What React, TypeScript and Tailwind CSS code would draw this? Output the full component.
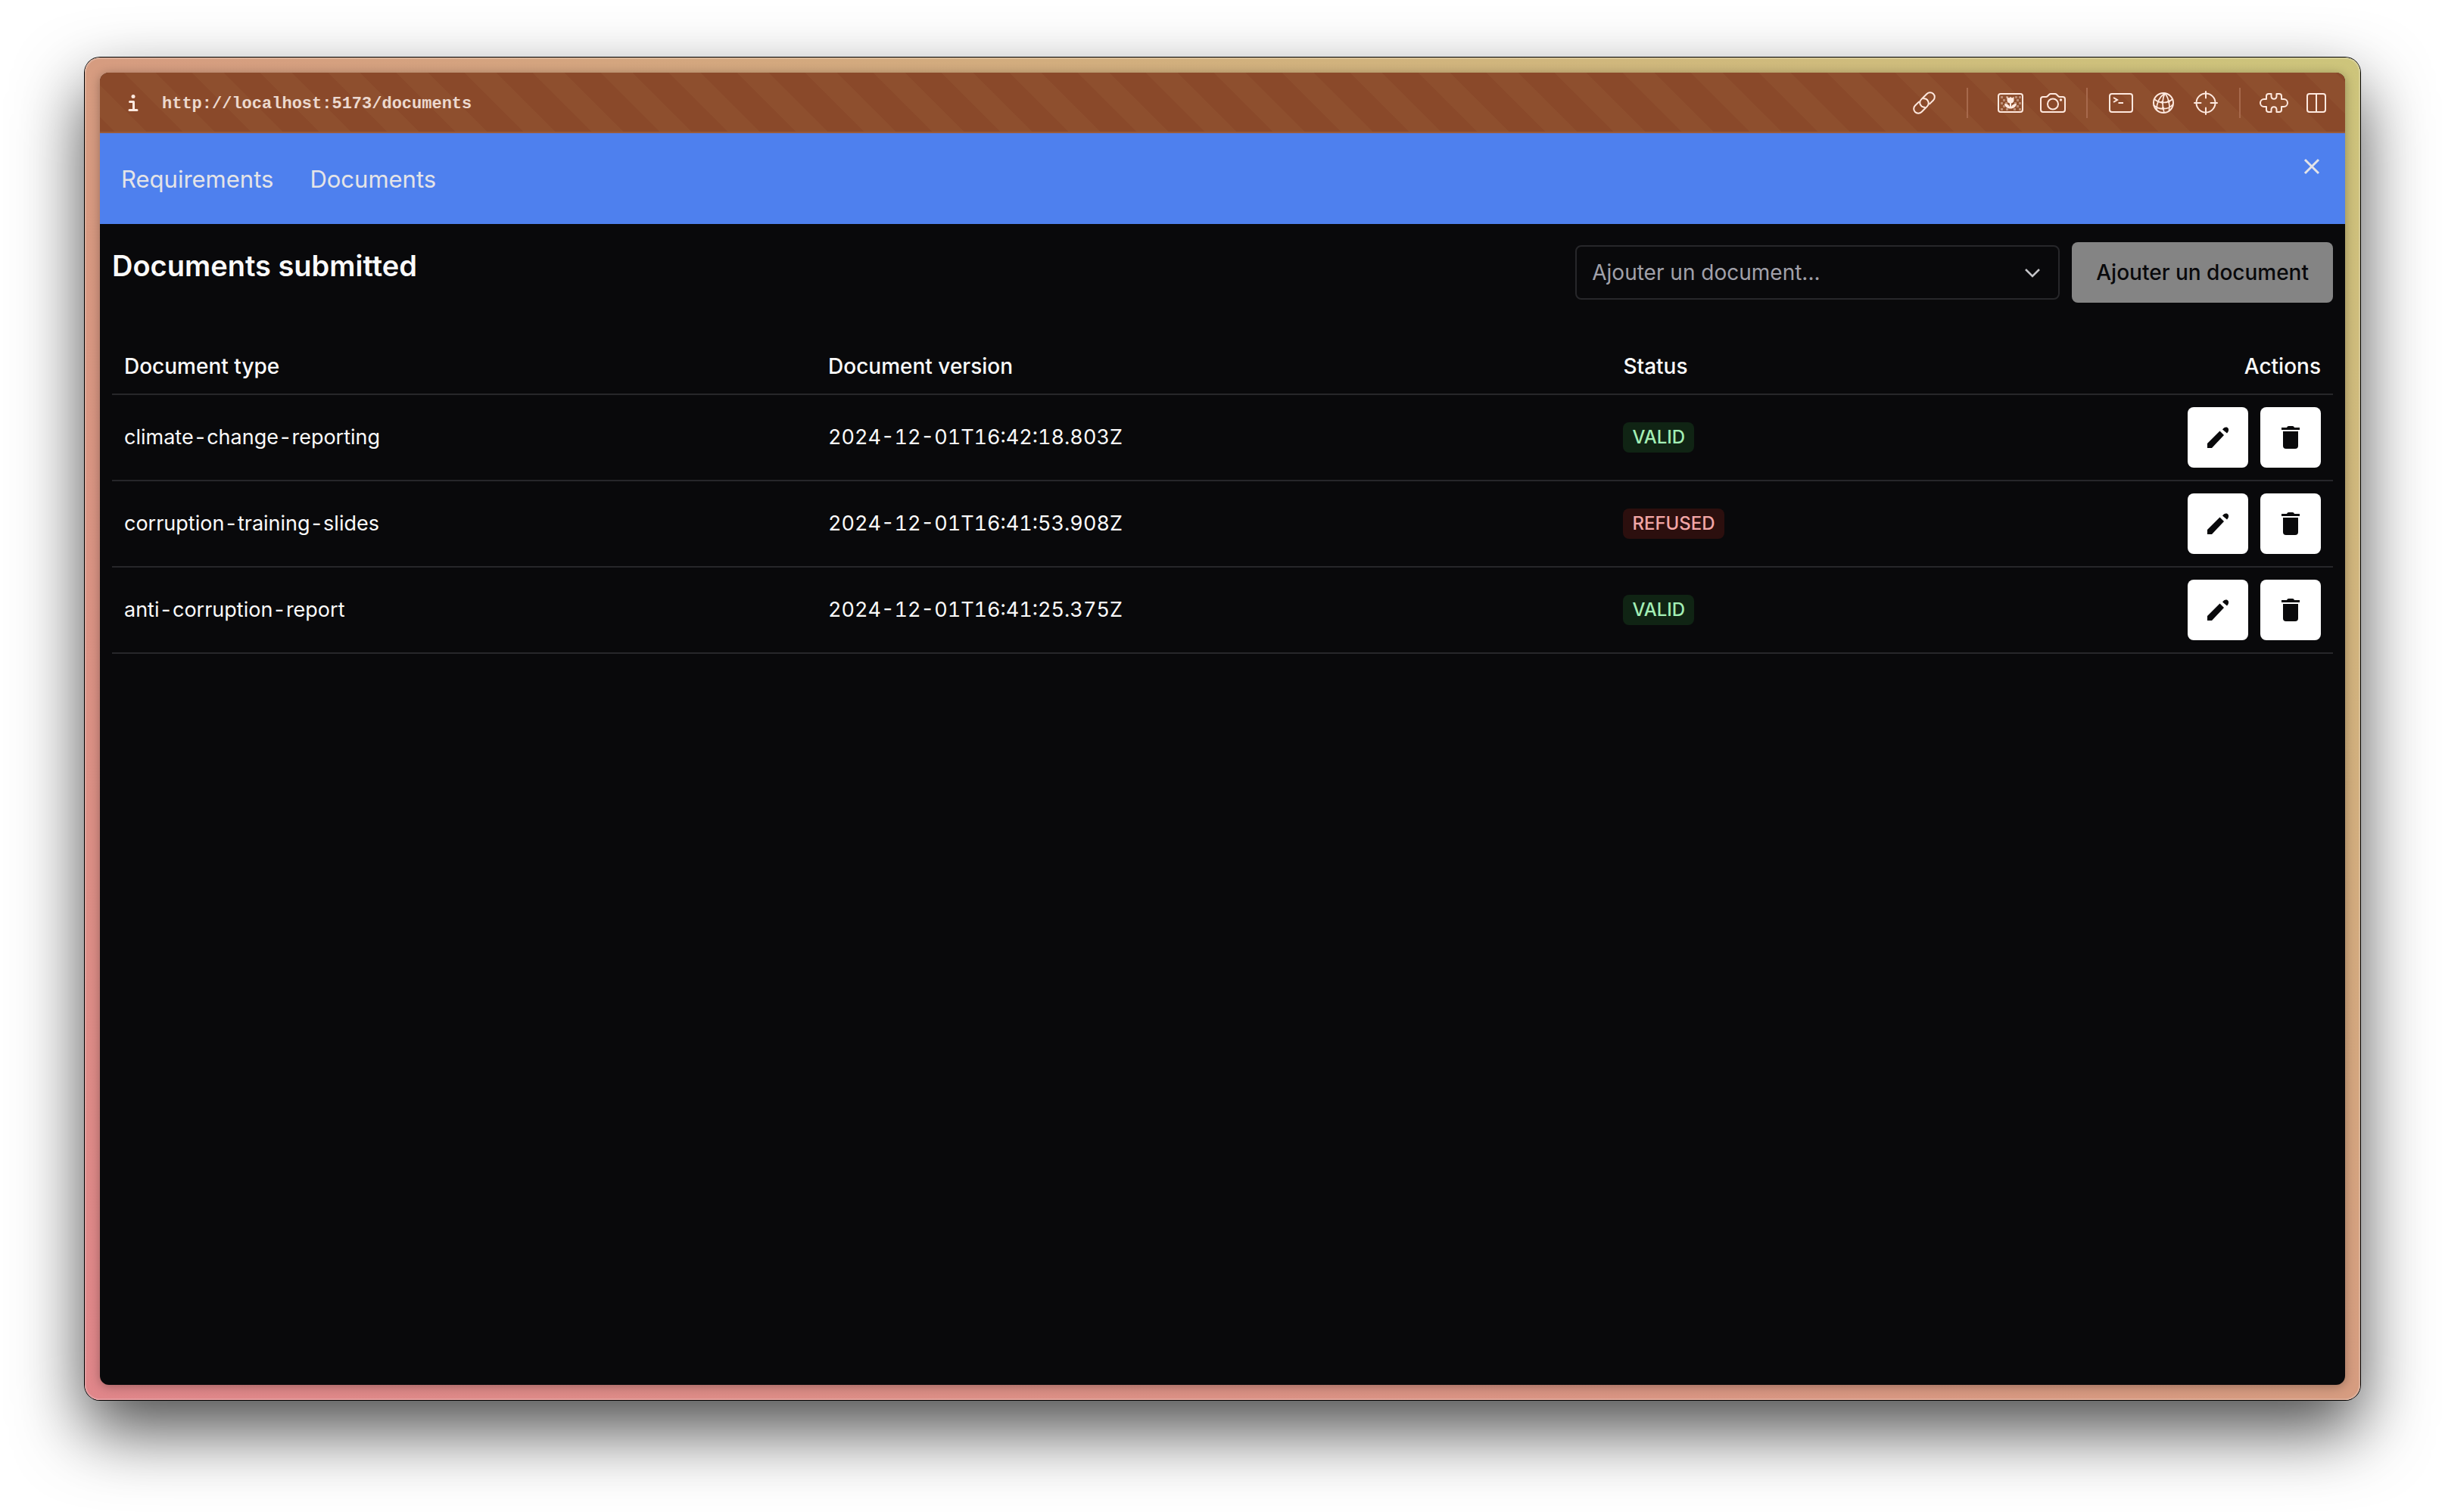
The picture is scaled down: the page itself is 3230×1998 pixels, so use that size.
import React from "react";

const documents = [
  { type: "climate-change-reporting", version: "2024-12-01T16:42:18.803Z", status: "VALID" },
  { type: "corruption-training-slides", version: "2024-12-01T16:41:53.908Z", status: "REFUSED" },
  { type: "anti-corruption-report", version: "2024-12-01T16:41:25.375Z", status: "VALID" },
];

const badgeTone: Record<string, string> = {
  VALID: "bg-[#102414] text-[#a3efb5]",
  REFUSED: "bg-[#2c0f0e] text-[#f2a6a6]",
};

function InfoIcon() {
  return (
    <svg className="h-8 w-4" viewBox="0 0 16 32" fill="none" stroke="#ffe9df" strokeWidth="3" aria-hidden="true">
      <circle cx="8" cy="7.500" r="2.500" fill="#ffe9df" stroke="none" />
      <path d="M3.500 14.500h5v11M3 25.500h10" strokeLinejoin="round" strokeLinecap="round" />
    </svg>
  );
}

function LinkIcon() {
  return (
    <svg className="size-8" viewBox="-16 -16 32 32" fill="none" stroke="#ffe9df" strokeWidth="2" strokeLinecap="round" aria-hidden="true">
      <g transform="rotate(-45)">
        <path d="M-4 -6H-11a6 6 0 0 0 0 12H-.5a6 6 0 0 0 4-10.500" />
        <path d="M4 6H11a6 6 0 0 0 0-12H.5a6 6 0 0 0-4 10.500" />
      </g>
    </svg>
  );
}

function PictureIcon() {
  const squares = [
    [5, 5], [12, 5], [24, 5], [29, 5],
    [8, 9], [26, 9],
    [5, 13], [11, 13], [23, 13], [29, 13],
    [8, 17], [26, 17],
    [5, 21], [12, 21], [22, 21], [29, 21],
  ];
  return (
    <svg className="h-7 w-9" viewBox="0 0 36 28" aria-hidden="true">
      {squares.map(([x, y]) => (
        <rect key={x + "-" + y} x={x} y={y} width="3" height="3" fill="#ffe9df" opacity="0.4" />
      ))}
      <rect x="2" y="2" width="32" height="24" rx="3" fill="none" stroke="#ffe9df" strokeWidth="2" />
      <path
        d="M13.500 6l2.500 1.500L18 6l2 1.500L22.500 6v4.500c0 2.500-1.500 3.500-3.500 4V19c1-2.500 4-4 7-4-.5 4-3.500 6.500-8 6.500s-7.500-2.500-8-6.500c3 0 6 1.500 7 4v-4.500c-2-.5-3.500-1.500-3.500-4z"
        fill="#ffe9df"
      />
    </svg>
  );
}

function CameraIcon() {
  return (
    <svg className="h-7 w-9" viewBox="0 0 36 28" fill="none" stroke="#ffe9df" strokeWidth="2" strokeLinejoin="round" aria-hidden="true">
      <path d="M5 6h4q1 0 2-1l2-2q1-1 2-1h6q1 0 2 1l2 2q1 1 2 1h4q3 0 3 3v14q0 3-3 3H5q-3 0-3-3V9q0-3 3-3z" />
      <circle cx="18" cy="15.500" r="7" />
      <circle cx="28.500" cy="10" r="1.700" fill="#ffe9df" stroke="none" />
    </svg>
  );
}

function TerminalIcon() {
  return (
    <svg className="h-7 w-9" viewBox="0 0 36 28" fill="none" stroke="#ffe9df" strokeWidth="2" aria-hidden="true">
      <rect x="3" y="2" width="30" height="24" rx="3" />
      <path d="M8 7l5 3-5 3M14.500 14H21" />
    </svg>
  );
}

function GlobeIcon() {
  return (
    <svg className="size-8" viewBox="0 0 32 32" fill="none" stroke="#ffe9df" strokeWidth="1.700" aria-hidden="true">
      <circle cx="16" cy="16" r="13" strokeWidth="2" />
      <path d="M4 11c7 6 17 6 24 0M3 19c8 7 20 6 25.500-1M18 3c-7 5-11 12-11 22M18 3c-4 8-4 16-1 26M18 3c5 7 7 14 5.500 23" />
      <circle cx="14.500" cy="15" r="1.800" fill="#ffe9df" stroke="none" />
      <circle cx="23" cy="14" r="1.800" fill="#ffe9df" stroke="none" />
      <circle cx="15.500" cy="23" r="1.800" fill="#ffe9df" stroke="none" />
    </svg>
  );
}

function TargetIcon() {
  return (
    <svg className="size-9" viewBox="0 0 36 36" fill="none" stroke="#ffe9df" strokeWidth="2" strokeLinecap="round" aria-hidden="true">
      <circle cx="18" cy="18" r="12.500" />
      <path d="M18 3v8.500M18 24.500V33M3 18h8.500M24.500 18H33" />
    </svg>
  );
}

function PuzzleIcon() {
  return (
    <svg className="h-7 w-10" viewBox="0 0 40 28" fill="none" stroke="#ffe9df" strokeWidth="2" strokeLinejoin="round" aria-hidden="true">
      <path d="M13 2h3.500v3c0 5 7 5 7 0V2H27q3 0 3 3v4h3a5 5 0 0 1 0 10h-3v4q0 3-3 3h-3.500v-3c0-5-7-5-7 0v3H13q-3 0-3-3v-4H7A5 5 0 0 1 7 9h3V5q0-3 3-3z" />
    </svg>
  );
}

function SplitIcon() {
  return (
    <svg className="size-7" viewBox="0 0 28 28" fill="none" stroke="#ffe9df" strokeWidth="2" aria-hidden="true">
      <rect x="2" y="2" width="24" height="24" rx="3" />
      <path d="M14 2v24" />
    </svg>
  );
}

function PencilIcon() {
  return (
    <svg className="size-8" viewBox="0 0 32 32" fill="#09090b" aria-hidden="true">
      <path d="M2 24L18.500 7.500l5.500 5.500L8 30H2z" />
      <path d="M22 5.500C25 .5 31 2 30 7q-.3 1.500-2 3.500z" />
    </svg>
  );
}

function TrashIcon() {
  return (
    <svg className="size-8" viewBox="0 0 32 32" fill="#09090b" aria-hidden="true">
      <path d="M4 3h7q.5-2 2.500-2h5q2 0 2.500 2h7v3H4z" />
      <path d="M6 8h20v19q0 4-4 4H10q-4 0-4-4z" />
    </svg>
  );
}

const toolGroups = [
  { spacing: "pr-9", tools: [{ label: "Copy link", Icon: LinkIcon }] },
  {
    spacing: "pl-9 pr-6",
    tools: [
      { label: "Images", Icon: PictureIcon },
      { label: "Screenshot", Icon: CameraIcon },
    ],
  },
  {
    spacing: "px-6",
    tools: [
      { label: "Console", Icon: TerminalIcon },
      { label: "Network", Icon: GlobeIcon },
      { label: "Inspect", Icon: TargetIcon },
    ],
  },
  {
    spacing: "pl-6",
    tools: [
      { label: "Extensions", Icon: PuzzleIcon },
      { label: "Split view", Icon: SplitIcon },
    ],
  },
];

function AddressBar() {
  return (
    <div className="flex h-20 items-center justify-between border-b-2 border-[#985a3b] bg-[#8a492a] bg-[linear-gradient(45deg,#8a492a_11%,#8e4f2e_11%_34%,#8a492a_34%_61%,#8e4f2e_61%_84%,#8a492a_84%)] bg-[length:90px_90px] bg-left-bottom pt-0.5 pl-9 pr-[18px]">
      <div className="flex items-center gap-[30px]">
        <InfoIcon />
        <span className="pt-1 font-['Liberation_Mono',monospace] text-[22px] font-bold leading-8 text-[#ecd9cf]">
          http://localhost:5173/documents
        </span>
      </div>
      <div className="flex items-center divide-x-2 divide-[#a7694c]">
        {toolGroups.map(({ spacing, tools }) => (
          <div key={tools[0].label} className={"flex h-10 items-center gap-4 " + spacing}>
            {tools.map(({ label, Icon }) => (
              <button key={label} type="button" aria-label={label} className="flex size-10 items-center justify-center">
                <Icon />
              </button>
            ))}
          </div>
        ))}
      </div>
    </div>
  );
}

export default function App() {
  return (
    <div className="flex min-h-screen flex-col overflow-hidden bg-white px-28 pt-[76px] pb-[148px] font-['Inter',sans-serif]">
      <div className="flex flex-1 flex-col rounded-[20px] bg-[linear-gradient(to_top_right,#e0868a,#d69c80_50%,#cdc57b)] p-5 shadow-[inset_0_0_0_2px_rgba(255,255,255,0.18),0_0_0_1px_#000,0_40px_90px_rgba(0,0,0,0.7)]">
        <div className="flex flex-1 flex-col overflow-hidden rounded-xl bg-[#09090b] shadow-[0_2px_14px_rgba(0,0,0,0.3)]">
          <AddressBar />
          <header className="flex h-[120px] items-start justify-between bg-[#4e80ee] px-7">
            <nav className="flex h-full items-center gap-12 pt-0.5 text-[31px] text-[#e4e4e7]">
              <a href="#requirements">Requirements</a>
              <a href="#documents">Documents</a>
            </nav>
            <button type="button" aria-label="Close" className="mt-7 flex size-8 items-center justify-center">
              <svg className="size-6" viewBox="0 0 24 24" stroke="#e4e4e7" strokeWidth="3" aria-hidden="true">
                <path d="M3 3l18 18M21 3L3 21" />
              </svg>
            </button>
          </header>
          <main className="px-4 pt-6 text-[28px] leading-10 text-[#fafafa]">
            <div className="flex items-start justify-between">
              <h1 className="pt-0.5 text-[38px] font-semibold leading-[58px]">Documents submitted</h1>
              <div className="flex items-center gap-4">
                <div className="relative">
                  <select
                    aria-label="Ajouter un document"
                    defaultValue=""
                    className="h-[72px] w-[640px] appearance-none rounded-lg border-2 border-[#27272a] bg-transparent px-5 text-[#a1a1aa]"
                  >
                    <option value="">Ajouter un document...</option>
                  </select>
                  <svg
                    className="pointer-events-none absolute right-5 top-5 size-8"
                    viewBox="0 0 32 32"
                    fill="none"
                    stroke="#c4c4c8"
                    strokeWidth="2.500"
                    aria-hidden="true"
                  >
                    <path d="M7 12l9 9 9-9" />
                  </svg>
                </div>
                <button type="button" disabled className="h-20 rounded-lg bg-[#848484] px-8 font-medium text-[#09090b]">
                  Ajouter un document
                </button>
              </div>
            </div>
            <table className="mt-12 w-full">
              <thead>
                <tr className="h-[73px] border-b-2 border-[#27272a] text-left">
                  <th className="w-[31.7%] px-4 font-medium">Document type</th>
                  <th className="w-[35.8%] px-4 font-medium">Document version</th>
                  <th className="px-4 font-medium">Status</th>
                  <th className="px-4 text-right font-medium">Actions</th>
                </tr>
              </thead>
              <tbody className="text-[27px] tabular-nums">
                {documents.map((doc) => (
                  <tr key={doc.version} className="border-b-2 border-[#27272a]">
                    <td className="p-4">{doc.type}</td>
                    <td className="p-4">{doc.version}</td>
                    <td className="p-4">
                      <span className={"flex h-10 w-fit items-center rounded-lg px-3 text-2xl font-medium " + badgeTone[doc.status]}>
                        {doc.status}
                      </span>
                    </td>
                    <td className="p-4">
                      <div className="flex justify-end gap-4">
                        <button type="button" aria-label="Edit" className="flex size-20 items-center justify-center rounded-lg bg-white">
                          <PencilIcon />
                        </button>
                        <button type="button" aria-label="Delete" className="flex size-20 items-center justify-center rounded-lg bg-white">
                          <TrashIcon />
                        </button>
                      </div>
                    </td>
                  </tr>
                ))}
              </tbody>
            </table>
          </main>
        </div>
      </div>
    </div>
  );
}
